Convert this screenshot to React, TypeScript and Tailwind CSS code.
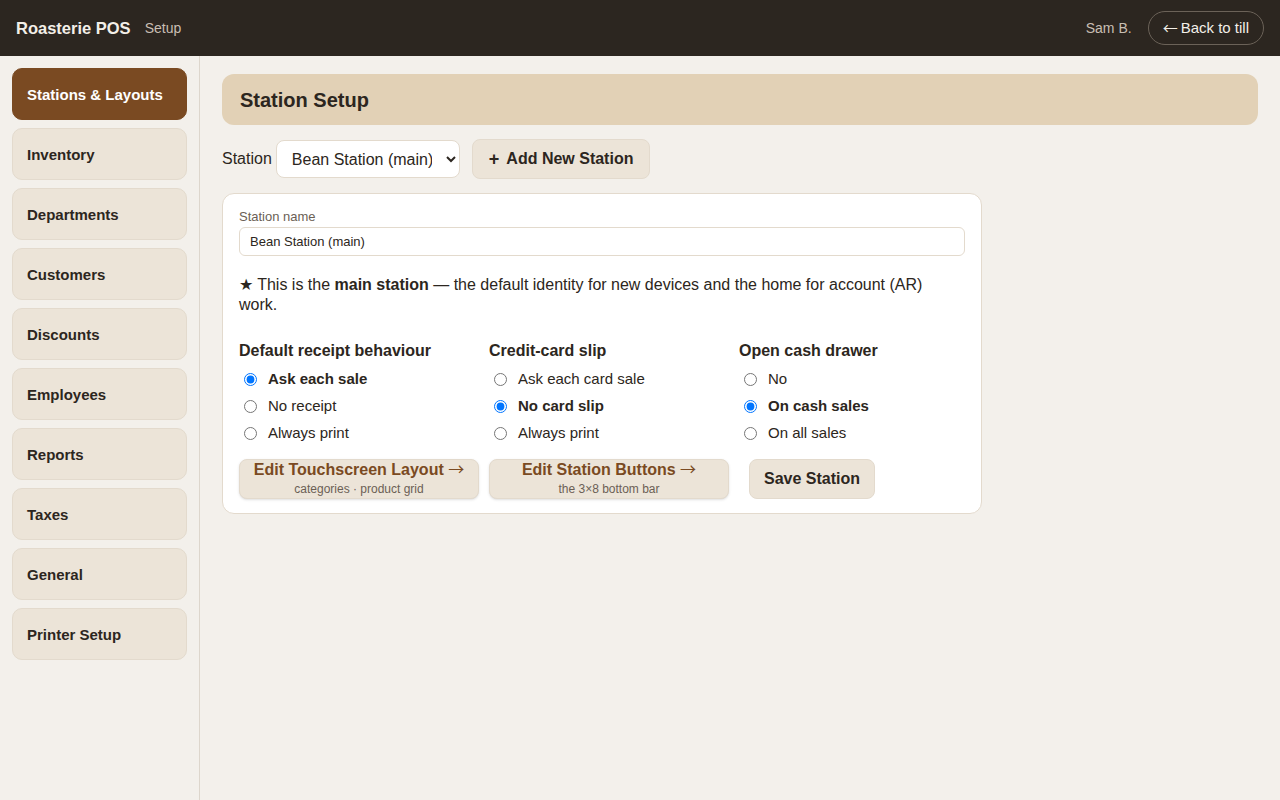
import React, { useState } from "react";

const navItems = [
  "Stations & Layouts",
  "Inventory",
  "Departments",
  "Customers",
  "Discounts",
  "Employees",
  "Reports",
  "Taxes",
  "General",
  "Printer Setup",
];

const groups = [
  {
    name: "receipt",
    title: "Default receipt behaviour",
    options: ["Ask each sale", "No receipt", "Always print"],
    initial: 0,
  },
  {
    name: "card",
    title: "Credit-card slip",
    options: ["Ask each card sale", "No card slip", "Always print"],
    initial: 1,
  },
  {
    name: "drawer",
    title: "Open cash drawer",
    options: ["No", "On cash sales", "On all sales"],
    initial: 1,
  },
];

// thin, long arrow glyph like the system one
function Arrow({ dir }: { dir: "left" | "right" }) {
  return (
    <span
      className="font-normal"
      style={{ fontFamily: '"Noto Sans CJK JP", "DejaVu Sans", sans-serif' }}
    >
      {dir === "left" ? "←" : "→"}
    </span>
  );
}

function RadioGroup({
  name,
  title,
  options,
  initial,
}: {
  name: string;
  title: string;
  options: string[];
  initial: number;
}) {
  const [value, setValue] = useState(initial);
  return (
    <div>
      <h3 className="mb-[5px] text-base leading-5 font-bold">{title}</h3>
      {options.map((opt, i) => (
        <label key={opt} className="flex h-[27px] items-center text-[15px]">
          <input
            type="radio"
            name={name}
            checked={value === i}
            onChange={() => setValue(i)}
            className="ml-[5px] h-[13px] w-[13px]"
          />
          <span className={`ml-[11px] ${value === i ? "font-bold" : ""}`}>{opt}</span>
        </label>
      ))}
    </div>
  );
}

export default function App() {
  const [active, setActive] = useState(0);
  const [stationName, setStationName] = useState("Bean Station (main)");

  return (
    <div
      className="flex min-h-screen flex-col bg-[#f3f0eb] text-[#2c2620]"
      style={{ fontFamily: '"Liberation Sans", Arial, sans-serif' }}
    >
      <header className="flex h-14 items-center bg-[#2c2620] px-4">
        <span className="text-[16.5px] font-bold text-[#f3efe8]">Roasterie POS</span>
        <span className="ml-[14px] text-sm text-[#c9bfb3]">Setup</span>
        <span className="ml-auto text-sm text-[#c9bfb3]">Sam B.</span>
        <button className="ml-4 flex h-[34px] items-center gap-[3px] rounded-full border border-[#6b6258] px-[14px] text-[15px] text-[#f3efe8]">
          <Arrow dir="left" /> Back to till
        </button>
      </header>

      <div className="flex flex-1">
        <aside className="flex w-[200px] flex-col gap-2 border-r border-[#ddd6cc] px-3 pt-3">
          {navItems.map((item, i) => (
            <button
              key={item}
              onClick={() => setActive(i)}
              className={`h-[52px] w-[175px] rounded-[10px] border px-[14px] pt-[2px] text-left text-[15px] font-bold ${
                active === i
                  ? "border-[#7a4a22] bg-[#7a4a22] text-white"
                  : "border-[#e3dacd] bg-[#ece4d8] text-[#2c2620]"
              }`}
            >
              {item}
            </button>
          ))}
        </aside>

        <main className="flex-1 pt-[18px] pr-[22px] pl-[22px]">
          <div className="flex h-[51px] items-center rounded-xl bg-[#e2d1b6] px-[18px]">
            <h1 className="text-xl font-bold">Station Setup</h1>
          </div>

          <div className="mt-[14px] flex items-center">
            <span className="text-base">Station</span>
            <select className="ml-1 h-[38px] w-[184px] rounded-lg border border-[#e3dacd] bg-white px-[11px] text-base">
              <option>Bean Station (main)</option>
            </select>
            <button className="ml-3 flex h-10 items-center rounded-lg border border-[#e3dacd] bg-[#ece4d8] px-4 text-base font-bold">
              <span className="text-[18px] leading-none">+</span>
              <span className="ml-[7px]">Add New Station</span>
            </button>
          </div>

          <div className="mt-[14px] w-[760px] rounded-xl border border-[#e3dacd] bg-white px-4 pt-[15px] pb-[14px]">
            <label className="block text-[13px] leading-4 text-[#6b5f55]">Station name</label>
            <input
              value={stationName}
              onChange={(e) => setStationName(e.target.value)}
              className="mt-[2px] h-[29px] w-full rounded-md border border-[#e3dacd] px-[10px] text-[13px] outline-none"
            />

            <p className="mt-[19px] max-w-[700px] text-base leading-5">
              ★ This is the <b>main station</b> — the default identity for new devices and the home for
              account (AR) work.
            </p>

            <div className="mt-[26px] grid grid-cols-[240px_240px_240px] gap-[10px]">
              {groups.map((g) => (
                <RadioGroup key={g.name} {...g} />
              ))}
            </div>

            <div className="mt-[12px] flex gap-[10px]">
              <button className="flex h-10 w-[240px] flex-col items-center rounded-lg border border-[#e3dacd] bg-[#ece4d8] pb-[2px] shadow-sm">
                <span className="text-base leading-[17px] font-bold text-[#7a4a22]">
                  Edit Touchscreen Layout <Arrow dir="right" />
                </span>
                <span className="mt-1 text-xs leading-[14px] text-[#6b5f55]">
                  categories · product grid
                </span>
              </button>
              <button className="flex h-10 w-[240px] flex-col items-center rounded-lg border border-[#e3dacd] bg-[#ece4d8] pb-[2px] shadow-sm">
                <span className="text-base leading-[17px] font-bold text-[#7a4a22]">
                  Edit Station Buttons <Arrow dir="right" />
                </span>
                <span className="mt-1 text-xs leading-[14px] text-[#6b5f55]">
                  the 3×8 bottom bar
                </span>
              </button>
              <button className="ml-[10px] h-10 rounded-lg border border-[#e3dacd] bg-[#ece4d8] px-[14px] text-base font-bold">
                Save Station
              </button>
            </div>
          </div>
        </main>
      </div>
    </div>
  );
}
